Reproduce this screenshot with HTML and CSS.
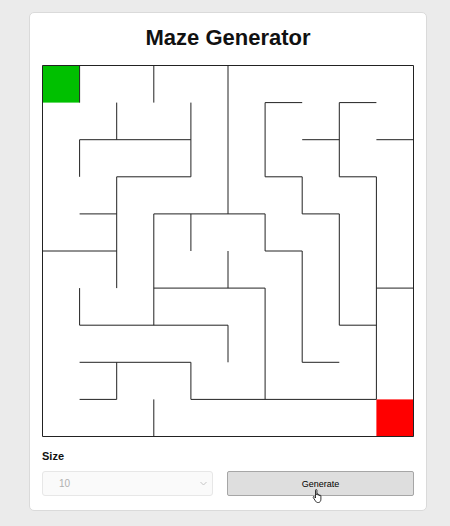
FILE: index.html
```html
<!DOCTYPE html>
<html lang="en">
<head>
<meta charset="utf-8">
<title>Maze Generator</title>
<link rel="stylesheet" href="styles.css">
</head>
<body>
<main class="card">
  <h1 class="title">Maze Generator</h1>
  <svg class="maze" width="372" height="372" viewBox="0 0 372 372" xmlns="http://www.w3.org/2000/svg">
    <g transform="translate(0.5 0.5) scale(37.1)">
      <rect class="start" x="0" y="0" width="1" height="1"/>
      <rect class="finish" x="9" y="9" width="1" height="1"/>
      <path class="walls" d="
        M0 0H10V10H0Z
        M1 0V1 M1 2V3 M1 6V7
        M2 1V2 M2 3V6 M2 8V9
        M3 0V1 M3 4V7 M3 9V10
        M4 1V3 M4 4V5 M4 8V9
        M5 0V4 M5 5V6 M5 7V8
        M6 1V3 M6 4V5 M6 6V9
        M7 3V4 M7 5V8
        M8 1V3 M8 4V7
        M9 3V9
        M6 1H7 M8 1H9
        M1 2H4 M7 2H8 M9 2H10
        M2 3H4 M6 3H7 M8 3H9
        M1 4H2 M3 4H6 M7 4H8
        M0 5H2 M6 5H7
        M3 6H6 M9 6H10
        M1 7H5 M8 7H9
        M1 8H4 M7 8H8
        M1 9H2 M4 9H9"/>
    </g>
  </svg>
  <label class="size-label">Size</label>
  <div class="controls">
    <div class="select is-disabled">
      <span class="select-value">10</span>
      <svg class="chevron" width="7" height="5" viewBox="0 0 7 5"><path d="M0.5 1L3.5 4L6.5 1"/></svg>
    </div>
    <button class="generate" type="button">Generate</button>
  </div>
  <svg class="cursor" width="12" height="14" viewBox="0 0 12 14" xmlns="http://www.w3.org/2000/svg">
    <path d="M3.5 1.2c0-.9 1.4-.9 1.4 0V6l.1-.6c0-.8 1.3-.8 1.3 0v.9c0-.8 1.3-.8 1.3 0v.6c0-.8 1.3-.8 1.3 0v3.3c0 1.8-1 3.3-2.4 3.3H5.6c-1 0-1.7-.8-2.2-1.6L1.3 8.6c-.5-.7.4-1.5 1-.9L3.5 9Z"/>
  </svg>
</main>
</body>
</html>
```
FILE: styles.css
```css
html, body {
  margin: 0;
  padding: 0;
}
body {
  background: #ebebeb;
  font-family: "Liberation Sans", Arial, sans-serif;
  width: 450px;
  height: 526px;
  overflow: hidden;
}
.card {
  position: relative;
  box-sizing: border-box;
  width: 398px;
  margin: 12px 0 0 29px;
  padding: 12px 12px 14px;
  background: #fff;
  border: 1px solid #dadada;
  border-radius: 5px;
  display: flex;
  flex-direction: column;
}
.title {
  margin: 0;
  font-size: 22px;
  line-height: 26px;
  font-weight: bold;
  text-align: center;
  color: #111;
}
.maze {
  display: block;
  margin-top: 14px;
}
.start { fill: #00c000; }
.finish { fill: #ff0000; }
.walls {
  fill: none;
  stroke: #222;
  stroke-width: 1;
  vector-effect: non-scaling-stroke;
}
.size-label {
  margin-top: 13px;
  font-size: 11px;
  line-height: 13px;
  font-weight: bold;
  color: #111;
}
.controls {
  margin-top: 8px;
  display: grid;
  grid-template-columns: 171px 1fr;
  gap: 14px;
  height: 25px;
}
.select {
  box-sizing: border-box;
  display: flex;
  align-items: center;
  justify-content: space-between;
  padding: 0 5px 0 16px;
  background: #fafafa;
  border: 1px solid #e7e7e7;
  border-radius: 3px;
}
.select-value {
  font-size: 10px;
  color: #b0b0b0;
}
.chevron path {
  fill: none;
  stroke: #c4c4c4;
  stroke-width: 1;
}
.generate {
  box-sizing: border-box;
  margin: 0;
  padding: 0;
  height: 25px;
  background: #dedede;
  border: 1px solid #a6a6a6;
  border-radius: 2px;
  font-family: "Liberation Sans", Arial, sans-serif;
  font-size: 9px;
  color: #000;
}
.cursor {
  position: absolute;
  left: 282px;
  top: 476px;
}
.cursor path {
  fill: #fff;
  stroke: #000;
  stroke-width: 0.8;
}
```
